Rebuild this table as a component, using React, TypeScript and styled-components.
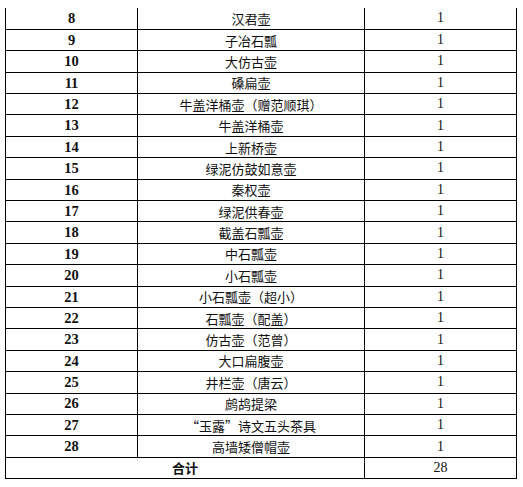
import React from 'react';
import styled, { createGlobalStyle } from 'styled-components';

const GlobalStyle = createGlobalStyle`
  html, body {
    margin: 0;
    padding: 0;
    background: #ffffff;
  }
`;

const Page = styled.div`
  padding: 8px 0 0 5px;
`;

const Table = styled.table`
  border-collapse: collapse;
  table-layout: fixed;
  width: 511px;
  color: #111;
`;

const Row = styled.tr`
  height: 21.4px;
`;

const Cell = styled.td<{ $kind: 'no' | 'name' | 'qty' | 'total' }>`
  border: 1px solid #000;
  padding: 0;
  text-align: center;
  vertical-align: middle;
  line-height: 1;
  white-space: nowrap;
  font-family: ${(p) =>
    p.$kind === 'name' || p.$kind === 'total'
      ? '"Noto Sans CJK SC", "Liberation Serif", serif'
      : '"Liberation Serif", "Noto Sans CJK SC", serif'};
  font-size: ${(p) => (p.$kind === 'no' ? '14.5px' : p.$kind === 'qty' ? '14px' : '13px')};
  font-weight: ${(p) => (p.$kind === 'no' || p.$kind === 'total' ? 700 : 400)};

  tr:first-child > & {
    border-top: none;
  }
`;

// full-width chinese quotation mark
const Quote = styled.span<{ $open?: boolean }>`
  display: inline-block;
  width: 1em;
  text-align: ${(p) => (p.$open ? 'right' : 'left')};
`;

interface Item {
  no: number;
  name: React.ReactNode;
  qty: number;
}

const items: Array<Item> = [
  { no: 8, name: '汉君壶', qty: 1 },
  { no: 9, name: '子冶石瓢', qty: 1 },
  { no: 10, name: '大仿古壶', qty: 1 },
  { no: 11, name: '磉扁壶', qty: 1 },
  { no: 12, name: '牛盖洋桶壶（赠范顺琪）', qty: 1 },
  { no: 13, name: '牛盖洋桶壶', qty: 1 },
  { no: 14, name: '上新桥壶', qty: 1 },
  { no: 15, name: '绿泥仿鼓如意壶', qty: 1 },
  { no: 16, name: '秦权壶', qty: 1 },
  { no: 17, name: '绿泥供春壶', qty: 1 },
  { no: 18, name: '截盖石瓢壶', qty: 1 },
  { no: 19, name: '中石瓢壶', qty: 1 },
  { no: 20, name: '小石瓢壶', qty: 1 },
  { no: 21, name: '小石瓢壶（超小）', qty: 1 },
  { no: 22, name: '石瓢壶（配盖）', qty: 1 },
  { no: 23, name: '仿古壶（范曾）', qty: 1 },
  { no: 24, name: '大口扁腹壶', qty: 1 },
  { no: 25, name: '井栏壶（唐云）', qty: 1 },
  { no: 26, name: '鹧鸪提梁', qty: 1 },
  {
    no: 27,
    name: (
      <>
        <Quote $open>“</Quote>玉露<Quote>”</Quote>诗文五头茶具
      </>
    ),
    qty: 1,
  },
  { no: 28, name: '高墙矮僧帽壶', qty: 1 },
];

// the list starts at 8 on this page, the total covers the whole list (1-28)
const TOTAL = 28;

function App() {
  return (
    <>
      <GlobalStyle />
      <Page lang="zh-CN">
        <Table>
          <colgroup>
            <col style={{ width: 132 }} />
            <col style={{ width: 227 }} />
            <col style={{ width: 152 }} />
          </colgroup>
          <tbody>
            {items.map((item) => (
              <Row key={item.no}>
                <Cell $kind="no">{item.no}</Cell>
                <Cell $kind="name">{item.name}</Cell>
                <Cell $kind="qty">{item.qty}</Cell>
              </Row>
            ))}
            <Row>
              <Cell $kind="total" colSpan={2}>合计</Cell>
              <Cell $kind="qty">{TOTAL}</Cell>
            </Row>
          </tbody>
        </Table>
      </Page>
    </>
  );
}

export default App;
